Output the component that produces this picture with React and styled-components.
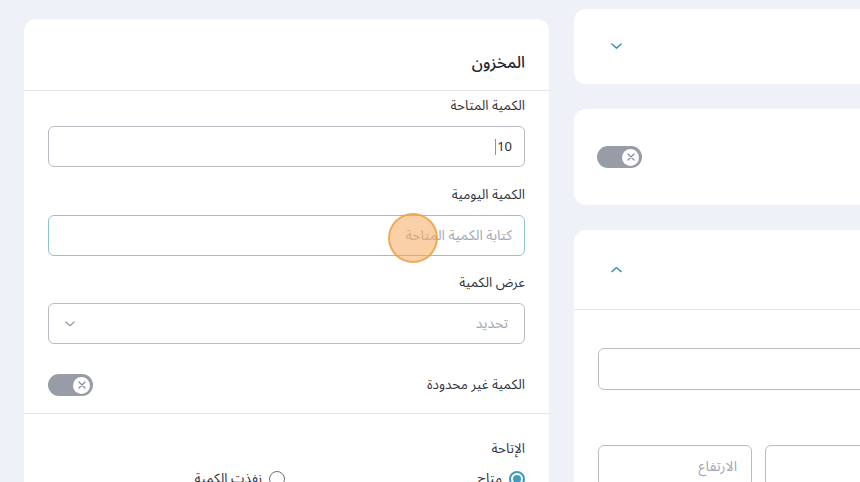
import React from 'react';
import styled, {createGlobalStyle} from 'styled-components';

const Global = createGlobalStyle`
  html, body {
    margin: 0;
    padding: 0;
    background: #eef1f8;
    overflow: hidden;
  }
  body {
    font-family: "Noto Sans Arabic", "DejaVu Sans", sans-serif;
    color: #2b2b33;
  }
`

const Page = styled.div`
  width: 860px;
  height: 482px;
  overflow: hidden;
  display: flex;
  gap: 25px;
  padding: 0 0 0 24px;
  box-sizing: border-box;
`

const Column = styled.div`
  display: flex;
  flex-direction: column;
  gap: ${p => p.gap || 0}px;
  padding-top: ${p => p.top || 0}px;
  width: 525px;
  flex-shrink: 0;
`

const Card = styled.section`
  background: #fff;
  border-radius: 12px;
  height: ${p => p.h ? p.h + 'px' : 'auto'};
  flex-shrink: 0;
  display: flex;
  flex-direction: column;
`

const CardHeader = styled.header`
  flex-shrink: 0;
  box-sizing: border-box;
  height: ${p => p.h || 72}px;
  display: flex;
  align-items: center;
  justify-content: ${p => p.left ? 'flex-start' : 'flex-end'};
  padding: ${p => p.left ? '0 24px 0 37px' : '16px 24px 0 24px'};
  border-bottom: ${p => p.line ? '1px solid #e3e6ec' : 'none'};
  font-size: 16px;
  font-weight: 500;
  color: #26262e;
`

const Body = styled.div`
  direction: rtl;
  padding: 6px 24px 0;
  display: flex;
  flex-direction: column;
  flex-shrink: 0;
`

const Label = styled.label`
  font-size: 13.5px;
  color: #34343c;
  line-height: 18px;
  margin-bottom: ${p => p.mb ?? 11}px;
  margin-top: ${p => p.mt || 0}px;
`

const InputBox = styled.div`
  position: relative;
  height: 41px;
  flex-shrink: 0;
  box-sizing: border-box;
  border: 1px solid ${p => p.focus ? '#8cc4d2' : '#b9bcc3'};
  border-radius: 6px;
  display: flex;
  align-items: center;
  justify-content: space-between;
  padding: 0 ${p => p.pr || 12}px 0 16px;
  font-size: 14px;
  color: ${p => p.muted ? '#a5a8b0' : '#2b2b33'};
  margin-bottom: ${p => p.mb || 0}px;
`

const Value = styled.span`
  direction: ltr;
  display: inline-flex;
  align-items: center;
  font-size: 13px;
`

const Caret = styled.span`
  display: inline-block;
  width: 1px;
  height: 16px;
  background: #5aa6bd;
  margin-right: 1px;
`

const Touch = styled.span`
  position: absolute;
  left: 339px;
  top: -3px;
  width: 50px;
  height: 50px;
  border-radius: 50%;
  background: rgba(246, 170, 92, 0.55);
  border: 2px solid rgba(236, 160, 70, 0.8);
  box-sizing: border-box;
`

const Row = styled.div`
  display: flex;
  align-items: center;
  justify-content: space-between;
  height: 22px;
  padding: 30px 0 17px;
`

const Divider = styled.hr`
  border: 0;
  border-top: 1px solid #e3e6ec;
  margin: 0 -24px;
`

const ToggleTrack = styled.span`
  direction: ltr;
  width: 45px;
  height: 22px;
  border-radius: 11px;
  background: #979ca7;
  display: inline-flex;
  align-items: center;
  justify-content: flex-end;
  padding-right: 3px;
  box-sizing: border-box;
`

const Knob = styled.span`
  width: 17px;
  height: 17px;
  border-radius: 50%;
  background: #fff;
  display: flex;
  align-items: center;
  justify-content: center;
`

const Radios = styled.div`
  display: flex;
  align-items: center;
  margin-top: 13px;
`

const RadioItem = styled.span`
  display: inline-flex;
  align-items: center;
  gap: 7px;
  flex-shrink: 0;
  width: ${p => p.w ? p.w + 'px' : 'auto'};
  font-size: 13.5px;
  line-height: 16px;
  color: #34343c;
`

const RadioDot = styled.span`
  width: 16px;
  height: 16px;
  border-radius: 50%;
  box-sizing: border-box;
  border: ${p => p.on ? '2px solid #3d9cc0' : '1.5px solid #6e7079'};
  display: flex;
  align-items: center;
  justify-content: center;
  &::after {
    content: '';
    width: 8px;
    height: 8px;
    border-radius: 50%;
    background: ${p => p.on ? '#3d9cc0' : 'transparent'};
  }
`

const RightBody = styled.div`
  padding: 38px 0 0 24px;
  display: flex;
  flex-direction: column;
`

const WideInput = styled.div`
  height: 42px;
  border: 1px solid #b9bcc3;
  border-radius: 6px;
  box-sizing: border-box;
`

const InputsRow = styled.div`
  display: flex;
  gap: 13px;
  margin-top: 55px;
`

const SmallInput = styled.div`
  flex-shrink: 0;
  width: ${p => p.w}px;
  height: 42px;
  border: 1px solid #b9bcc3;
  border-radius: 6px;
  box-sizing: border-box;
  display: flex;
  align-items: center;
  justify-content: flex-start;
  padding-right: 14px;
  font-size: 14px;
  color: #a5a8b0;
  direction: rtl;
`

const X = () => (
  <svg width="8" height="8" viewBox="0 0 8 8">
    <path d="M1 1L7 7M7 1L1 7" stroke="#8a8f99" strokeWidth="1.3" strokeLinecap="round" />
  </svg>
)

const Toggle = () => (
  <ToggleTrack><Knob><X /></Knob></ToggleTrack>
)

const Chevron = ({up, color = '#3f93b6', w = 11}) => (
  <svg width={w} height={w * 0.6} viewBox="0 0 12 7">
    <path d={up ? 'M1 6L6 1.5L11 6' : 'M1 1L6 5.5L11 1'} fill="none" stroke={color} strokeWidth="1.6" strokeLinecap="round" strokeLinejoin="round" />
  </svg>
)

export default function App() {
  return (
    <Page>
      <Global />
      <Column top={19}>
        <Card h={500}>
          <CardHeader h={72} line>المخزون</CardHeader>
          <Body>
            <Label>الكمية المتاحة</Label>
            <InputBox mb={19}><Value><Caret />10</Value><span /></InputBox>
            <Label>الكمية اليومية</Label>
            <InputBox focus muted mb={18}>
              <span>كتابة الكمية المتاحة</span>
              <Touch />
            </InputBox>
            <Label>عرض الكمية</Label>
            <InputBox muted pr={16}>
              <span>تحديد</span>
              <Chevron color="#9a9da5" w={10} />
            </InputBox>
            <Row>
              <Label mb={0}>الكمية غير محدودة</Label>
              <Toggle />
            </Row>
            <Divider />
            <Label mb={0} mt={26}>الإتاحة</Label>
            <Radios>
              <RadioItem w={240}><RadioDot on />متاح</RadioItem>
              <RadioItem><RadioDot />نفذت الكمية</RadioItem>
            </Radios>
          </Body>
        </Card>
      </Column>
      <Column top={9} gap={25}>
        <Card h={75}>
          <CardHeader h={75} left><Chevron /></CardHeader>
        </Card>
        <Card h={96}>
          <CardHeader h={96} left style={{paddingLeft: 23}}><Toggle /></CardHeader>
        </Card>
        <Card h={300}>
          <CardHeader h={80} left line><Chevron up /></CardHeader>
          <RightBody>
            <WideInput />
            <InputsRow>
              <SmallInput w={154}>الارتفاع</SmallInput>
              <SmallInput w={400} />
            </InputsRow>
          </RightBody>
        </Card>
      </Column>
    </Page>
  );
}
